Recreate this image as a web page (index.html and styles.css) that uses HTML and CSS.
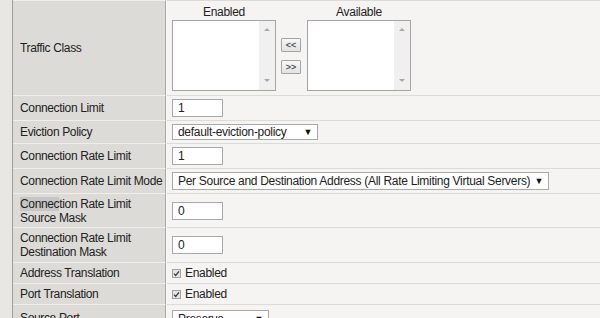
FILE: index.html
```html
<!DOCTYPE html>
<html lang="en">
<head>
    <meta charset="UTF-8">
    <title>Virtual Server Properties</title>
    <link rel="stylesheet" href="styles.css">
</head>
<body>
    <table class="props">
        <tr>
            <td class="lbl">Traffic Class</td>
            <td class="val val-tc">
                <div class="swap">
                    <div class="swap-col">
                        <div class="swap-head">Enabled</div>
                        <div class="listbox"><div class="lb-scroll"><span class="up"></span><span class="down"></span></div></div>
                    </div>
                    <div class="swap-btns">
                        <span class="mv">&lt;&lt;</span>
                        <span class="mv">&gt;&gt;</span>
                    </div>
                    <div class="swap-col">
                        <div class="swap-head">Available</div>
                        <div class="listbox"><div class="lb-scroll"><span class="up"></span><span class="down"></span></div></div>
                    </div>
                </div>
            </td>
        </tr>
        <tr>
            <td class="lbl">Connection Limit</td>
            <td class="val"><span class="inp">1</span></td>
        </tr>
        <tr>
            <td class="lbl">Eviction Policy</td>
            <td class="val"><span class="sel sel-evict">default-eviction-policy<span class="arrow">&#9660;</span></span></td>
        </tr>
        <tr>
            <td class="lbl">Connection Rate Limit</td>
            <td class="val"><span class="inp">1</span></td>
        </tr>
        <tr>
            <td class="lbl">Connection Rate Limit Mode</td>
            <td class="val"><span class="sel sel-mode">Per Source and Destination Address (All Rate Limiting Virtual Servers)<span class="arrow">&#9660;</span></span></td>
        </tr>
        <tr>
            <td class="lbl lbl-2 tight"><span class="hl">Connec</span>tion Rate Limit<br>Source Mask</td>
            <td class="val"><span class="inp">0</span></td>
        </tr>
        <tr>
            <td class="lbl lbl-2">Connection Rate Limit<br>Destination Mask</td>
            <td class="val"><span class="inp">0</span></td>
        </tr>
        <tr>
            <td class="lbl">Address Translation</td>
            <td class="val">
                <div class="chk">
                    <svg width="9" height="9" viewBox="0 0 9 9"><rect x="0.5" y="0.5" width="8" height="8" fill="#e4e4e4" stroke="#a2a2a2"/><path d="M2 4.6 L3.7 6.4 L7 2.4" fill="none" stroke="#3a3a3a" stroke-width="1.3"/></svg>
                    <span>Enabled</span>
                </div>
            </td>
        </tr>
        <tr>
            <td class="lbl">Port Translation</td>
            <td class="val">
                <div class="chk">
                    <svg width="9" height="9" viewBox="0 0 9 9"><rect x="0.5" y="0.5" width="8" height="8" fill="#e4e4e4" stroke="#a2a2a2"/><path d="M2 4.6 L3.7 6.4 L7 2.4" fill="none" stroke="#3a3a3a" stroke-width="1.3"/></svg>
                    <span>Enabled</span>
                </div>
            </td>
        </tr>
        <tr>
            <td class="lbl">Source Port</td>
            <td class="val val-sp"><span class="sel sel-port">Preserve<span class="arrow">&#9660;</span></span></td>
        </tr>
    </table>
</body>
</html>
```

FILE: styles.css
```css
body {
    margin: 0;
    padding-left: 12px;
    background: #e8e7e3;
    font-family: "Liberation Sans", Arial, sans-serif;
    font-size: 12px;
    letter-spacing: -0.3px;
    color: #222;
    overflow: hidden;
}

.props {
    border-collapse: separate;
    border-spacing: 0;
    table-layout: fixed;
    width: 588px;
    border-left: 1px solid #9e9e9e;
}

.props td {
    border-top: 1px solid #dddbd7;
    line-height: 14px;
    vertical-align: middle;
    white-space: nowrap;
}

.lbl {
    width: 139px;
    padding: 3px 6px 3px 7px;
    background: #dcdbd7;
    border-right: 1px solid #a9a9a9;
    border-top-color: #efeeeb !important;
    letter-spacing: -0.35px;
}

.lbl-2.tight {
    padding-bottom: 2px;
}

.hl {
    background: #c6c6c6;
}

.val {
    padding: 3px 5px;
    background: #f5f4f2;
    border-left: 1px solid #fbfbfa;
}

.val-tc {
    padding: 4px 5px;
}

.val-sp {
    vertical-align: top;
    padding-top: 5px;
}

/* traffic class swap lists */
.swap {
    display: flex;
    align-items: flex-end;
}

.swap-col {
    display: flex;
    flex-direction: column;
    align-items: center;
    width: 104px;
}

.swap-head {
    height: 14px;
    margin-bottom: 1px;
}

.listbox {
    position: relative;
    width: 104px;
    height: 71px;
    box-sizing: border-box;
    background: #fff;
    border: 1px solid #a5a5a5;
}

.lb-scroll {
    position: absolute;
    top: 0;
    right: 0;
    bottom: 0;
    width: 16px;
    background: #f0f0f0;
}

.lb-scroll .up,
.lb-scroll .down {
    position: absolute;
    left: 5px;
    border-left: 3px solid transparent;
    border-right: 3px solid transparent;
}

.lb-scroll .up {
    top: 7px;
    border-bottom: 3px solid #a8a8a8;
}

.lb-scroll .down {
    bottom: 8px;
    border-top: 3px solid #a8a8a8;
}

.swap-btns {
    display: flex;
    flex-direction: column;
    gap: 8px;
    margin: 0 6px 17px 5px;
}

.mv {
    display: flex;
    align-items: center;
    justify-content: center;
    width: 20px;
    height: 14px;
    box-sizing: border-box;
    border: 1px solid #a4a4a4;
    border-radius: 1px;
    background: linear-gradient(#f7f7f7, #e2e2e2);
    font-size: 9px;
    font-weight: bold;
    color: #555;
    letter-spacing: 0;
}

/* form controls */
.inp,
.sel {
    display: flex;
    align-items: center;
    height: 18px;
    box-sizing: border-box;
    background: #fff;
    border: 1px solid #a9a9a9;
    padding-left: 5px;
}

.inp {
    width: 51px;
}

.sel {
    justify-content: space-between;
    padding-right: 5px;
}

.sel-evict {
    width: 146px;
    height: 16px;
}

.sel-mode {
    width: 377px;
}

.sel-port {
    width: 97px;
}

.arrow {
    font-size: 9px;
    color: #111;
}

.chk {
    display: flex;
    align-items: center;
    gap: 4px;
}
```
